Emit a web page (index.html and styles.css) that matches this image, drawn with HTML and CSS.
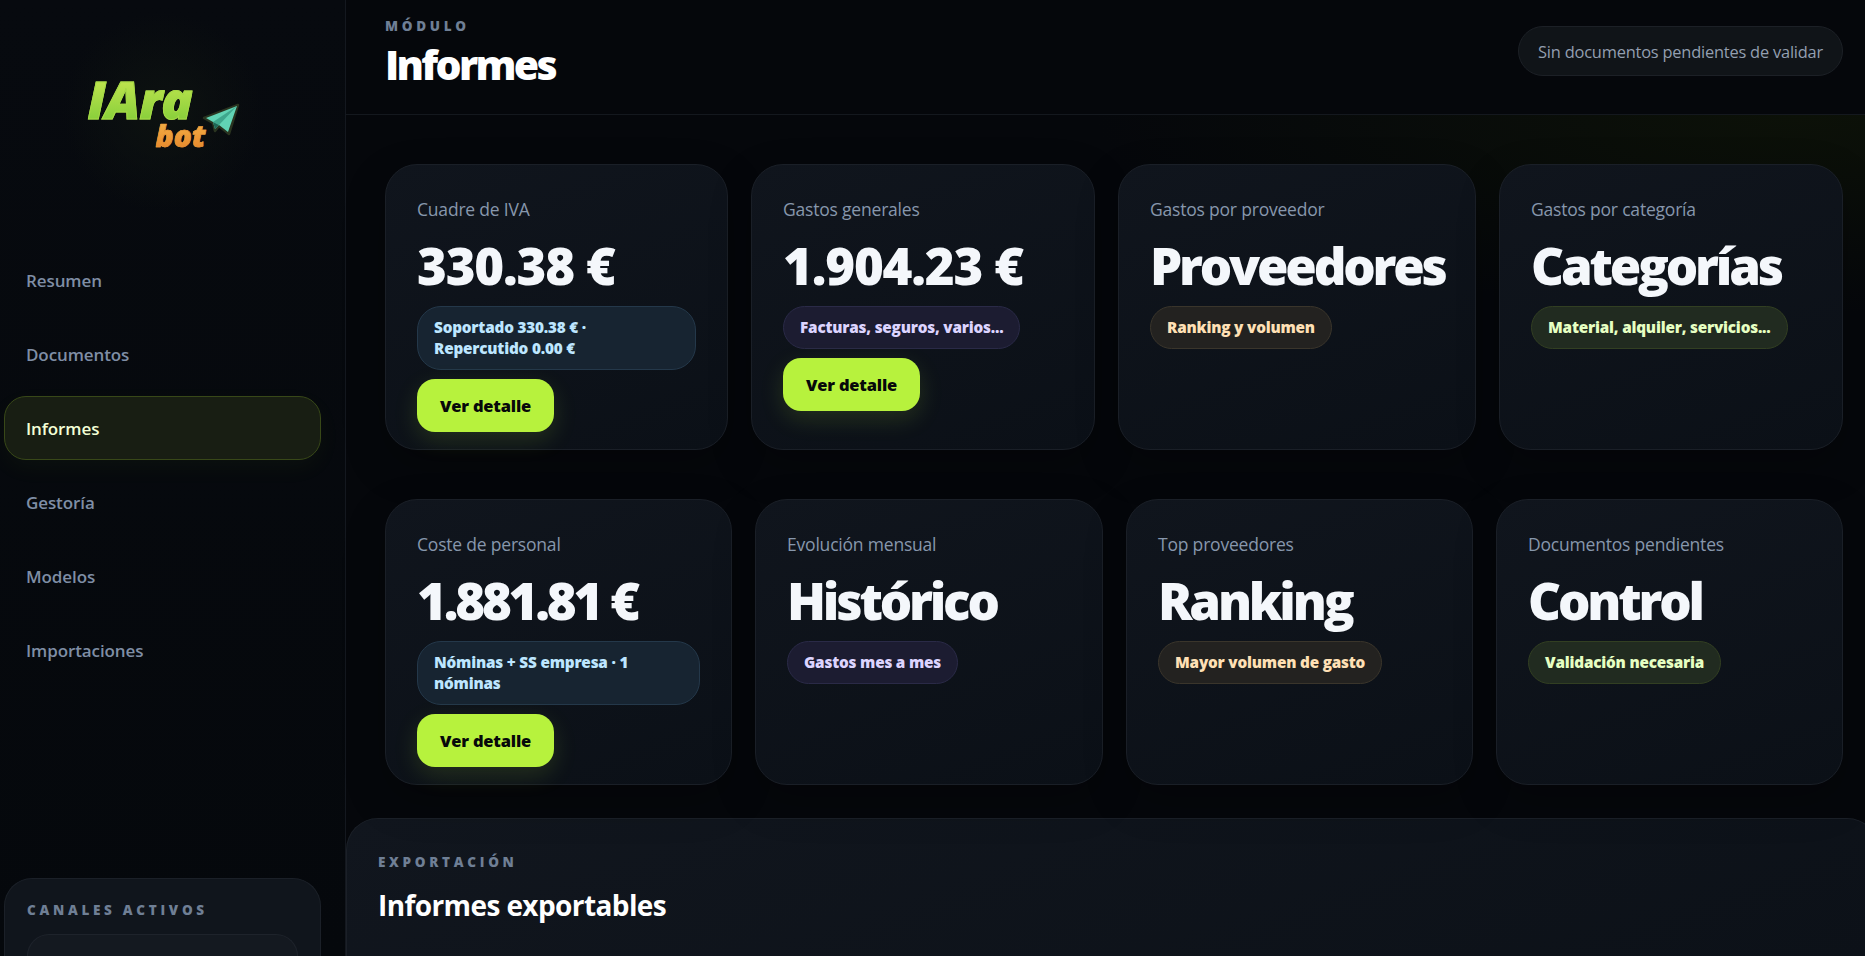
FILE: index.html
```html
<!DOCTYPE html>
<html lang="es">
<head>
    <meta charset="UTF-8">
    <meta name="viewport" content="width=device-width, initial-scale=1.0">
    <title>Informes</title>
    <link rel="stylesheet" href="styles.css">
</head>

<body>
    <div class="app">
        <!-- menu lateral -->
        <aside class="sidebar">
            <div class="logo">
                <div class="logo-mark">
                    <span class="logo-name">IAra</span>
                    <span class="logo-bot">bot</span>
                    <svg class="logo-plane" viewBox="0 0 38 34" width="38" height="34">
                        <path d="M2 15 L36 2 L27 31 L17 23 L13 28 L11 20 Z" fill="#1c2a1c" stroke="#2a3420" stroke-width="2.5" stroke-linejoin="round"/>
                        <path d="M4 15 L35 3 L26 29 L17 22 L13 26 L11 19 Z" fill="#61d3b4"/>
                        <path d="M11 19 L35 3 L17 22 Z" fill="#3fa78d"/>
                        <path d="M11 19 L13 26 L17 22 Z" fill="#1f6656"/>
                    </svg>
                </div>
            </div>

            <nav class="nav">
                <a class="nav-item">Resumen</a>
                <a class="nav-item">Documentos</a>
                <a class="nav-item active">Informes</a>
                <a class="nav-item">Gestoría</a>
                <a class="nav-item">Modelos</a>
                <a class="nav-item">Importaciones</a>
            </nav>

            <div class="channels">
                <div class="eyebrow">CANALES ACTIVOS</div>
                <div class="channel-box"></div>
            </div>
        </aside>

        <main class="main">
            <header class="topbar">
                <div>
                    <div class="eyebrow">MÓDULO</div>
                    <h1 class="page-title">Informes</h1>
                </div>
                <div class="status-pill">Sin documentos pendientes de validar</div>
            </header>

            <div class="content">
                <!-- primera fila -->
                <section class="cards cards-top">
                    <article class="card">
                        <div class="card-label">Cuadre de IVA</div>
                        <div class="card-value amount">330.38 €</div>
                        <div class="chip chip-blue">Soportado 330.38 € · Repercutido 0.00 €</div>
                        <button class="detail-button">Ver detalle</button>
                    </article>
                    <article class="card">
                        <div class="card-label">Gastos generales</div>
                        <div class="card-value amount">1.904.23 €</div>
                        <div class="chip chip-purple">Facturas, seguros, varios...</div>
                        <button class="detail-button">Ver detalle</button>
                    </article>
                    <article class="card">
                        <div class="card-label">Gastos por proveedor</div>
                        <div class="card-value">Proveedores</div>
                        <div class="chip chip-orange">Ranking y volumen</div>
                    </article>
                    <article class="card">
                        <div class="card-label">Gastos por categoría</div>
                        <div class="card-value">Categorías</div>
                        <div class="chip chip-green">Material, alquiler, servicios...</div>
                    </article>
                </section>

                <!-- segunda fila -->
                <section class="cards cards-bottom">
                    <article class="card">
                        <div class="card-label">Coste de personal</div>
                        <div class="card-value">1.881.81 €</div>
                        <div class="chip chip-blue">Nóminas + SS empresa · 1 nóminas</div>
                        <button class="detail-button">Ver detalle</button>
                    </article>
                    <article class="card">
                        <div class="card-label">Evolución mensual</div>
                        <div class="card-value">Histórico</div>
                        <div class="chip chip-purple">Gastos mes a mes</div>
                    </article>
                    <article class="card">
                        <div class="card-label">Top proveedores</div>
                        <div class="card-value">Ranking</div>
                        <div class="chip chip-orange">Mayor volumen de gasto</div>
                    </article>
                    <article class="card">
                        <div class="card-label">Documentos pendientes</div>
                        <div class="card-value">Control</div>
                        <div class="chip chip-green">Validación necesaria</div>
                    </article>
                </section>

                <section class="export">
                    <div class="eyebrow">EXPORTACIÓN</div>
                    <h2 class="export-title">Informes exportables</h2>
                </section>
            </div>
        </main>
    </div>
</body>
</html>
```

FILE: styles.css
```css
* {
    box-sizing: border-box;
}

html,
body {
    height: 100%;
    margin: 0;
}

body {
    overflow: hidden;
    background-color: #05070b;
    color: #f4f7fb;
    font-family: "Open Sans", "Noto Sans", sans-serif;
}

.app {
    display: flex;
    height: 956px;
    overflow: hidden;
}

/* menu lateral */
.sidebar {
    display: flex;
    flex-direction: column;
    flex: 0 0 346px;
    padding: 0 24px 0 4px;
    background: linear-gradient(180deg, #070a0f, #05080c);
    border-right: 1px solid #14181f;
}

.logo {
    display: flex;
    justify-content: center;
    height: 248px;
    padding-top: 76px;
    padding-left: 2px;
    background: radial-gradient(circle 100px at 50% 112px, #0d1210, transparent);
}

.logo-mark {
    position: relative;
    width: 156px;
    height: 76px;
}

.logo-name {
    position: absolute;
    left: 2px;
    top: 2px;
    font-size: 52px;
    font-weight: 800;
    font-style: italic;
    line-height: 0.8;
    letter-spacing: -0.8px;
    background: linear-gradient(180deg, #c3e64f, #88cf3b);
    -webkit-background-clip: text;
    background-clip: text;
    color: transparent;
    -webkit-text-stroke: 1px #a6da46;
}

.logo-bot {
    position: absolute;
    left: 70px;
    top: 48px;
    font-size: 30px;
    font-weight: 800;
    font-style: italic;
    line-height: 0.8;
    background: linear-gradient(180deg, #f2ac43, #e78a2e);
    -webkit-background-clip: text;
    background-clip: text;
    color: transparent;
    -webkit-text-stroke: 0.6px #ec9a38;
}

.logo-plane {
    position: absolute;
    left: 116px;
    top: 27px;
}

.nav {
    display: flex;
    flex-direction: column;
    gap: 10px;
}

.nav-item {
    display: flex;
    align-items: center;
    height: 64px;
    padding-left: 21px;
    border: 1px solid transparent;
    border-radius: 22px;
    color: #7f8ea5;
    font-size: 17px;
    font-weight: 600;
    letter-spacing: -0.1px;
}

.nav-item.active {
    color: #f3ffd6;
    background-color: #181e13;
    border-color: #384818;
    box-shadow: 0 8px 24px rgba(183, 242, 61, 0.04);
}

.channels {
    margin-top: auto;
    height: 78px;
    padding: 23px 22px 0;
    background-color: #10151c;
    border: 1px solid #1b2028;
    border-bottom: none;
    border-radius: 28px 28px 0 0;
}

.channel-box {
    height: 22px;
    margin-top: 16px;
    background-color: #141920;
    border: 1px solid #1e232b;
    border-bottom: none;
    border-radius: 22px 22px 0 0;
}

.eyebrow {
    color: #6f7f95;
    font-size: 13.5px;
    font-weight: 800;
    line-height: 16px;
    letter-spacing: 3.7px;
}

/* cabecera */
.main {
    flex: 1;
    min-width: 0;
    display: flex;
    flex-direction: column;
}

.topbar {
    display: flex;
    justify-content: space-between;
    align-items: center;
    flex: 0 0 115px;
    padding: 0 22px 6px 39px;
    background-color: #05070b;
    border-bottom: 1px solid #14181e;
}

.page-title {
    margin: 4px 0 0;
    font-size: 41px;
    font-weight: 800;
    line-height: 52px;
    letter-spacing: -2.7px;
    color: #fff;
}

.status-pill {
    display: flex;
    align-items: center;
    height: 50px;
    margin-bottom: 6px;
    padding: 0 19px;
    color: #939fb0;
    background-color: #101418;
    border: 1px solid #1c2026;
    border-radius: 25px;
    font-size: 16.4px;
    letter-spacing: -0.2px;
}

/* tarjetas */
.content {
    flex: 1;
    padding: 49px 22px 0 39px;
    background: radial-gradient(ellipse 700px 200px at 1450px 0, #0c1108, transparent), #05070b;
}

.cards {
    display: grid;
    gap: 23px;
}

.cards-top {
    grid-template-columns: 343px 344px 358px 344px;
}

.cards-bottom {
    margin-top: 49px;
    grid-template-columns: 347px 348px 347px 347px;
}

.card {
    height: 286px;
    padding: 32px 31px;
    background: linear-gradient(160deg, #10151d, #0b1017);
    border: 1px solid #1a1f27;
    border-radius: 32px;
    box-shadow: 0 16px 40px rgba(0, 0, 0, 0.25);
}

.card-label {
    color: #8797ac;
    font-size: 17.5px;
    line-height: 24px;
    letter-spacing: -0.2px;
}

.card-value {
    margin-top: 9px;
    color: #f4f7fb;
    font-size: 51px;
    font-weight: 800;
    line-height: 70px;
    letter-spacing: -3.2px;
    white-space: nowrap;
}

.card-value.amount {
    letter-spacing: -1.2px;
}

.chip {
    width: fit-content;
    margin-top: 6px;
    padding: 10px 16px;
    border: 1px solid;
    border-radius: 24px;
    font-size: 15.3px;
    font-weight: 800;
    line-height: 21px;
    letter-spacing: -0.2px;
}

.chip-blue {
    color: #bde6ff;
    background-color: #172431;
    border-color: #24384a;
}

.chip-purple {
    color: #dcd4ff;
    background-color: #1c1c31;
    border-color: #2a2a47;
}

.chip-orange {
    color: #ffe0b5;
    background-color: #232220;
    border-color: #3a352b;
}

.chip-green {
    color: #e6ffc2;
    background-color: #212b20;
    border-color: #323f22;
}

.detail-button {
    display: block;
    height: 53px;
    margin-top: 9px;
    padding: 0 23px;
    color: #07090a;
    background-color: #b7f23d;
    border: none;
    border-radius: 18px;
    box-shadow: 0 8px 24px rgba(183, 242, 61, 0.14);
    font-family: inherit;
    font-size: 16.5px;
    font-weight: 800;
    letter-spacing: -0.2px;
}

/* exportacion */
.export {
    height: 138px;
    margin: 33px -36px 0 -39px;
    padding: 35px 31px 0;
    background: linear-gradient(160deg, #11161e, #0c1118);
    border: 1px solid #1b2028;
    border-bottom: none;
    border-radius: 32px 32px 0 0;
}

.export-title {
    margin: 16px 0 0;
    color: #fff;
    font-size: 28px;
    font-weight: 700;
    line-height: 38px;
    letter-spacing: -0.6px;
}
```
